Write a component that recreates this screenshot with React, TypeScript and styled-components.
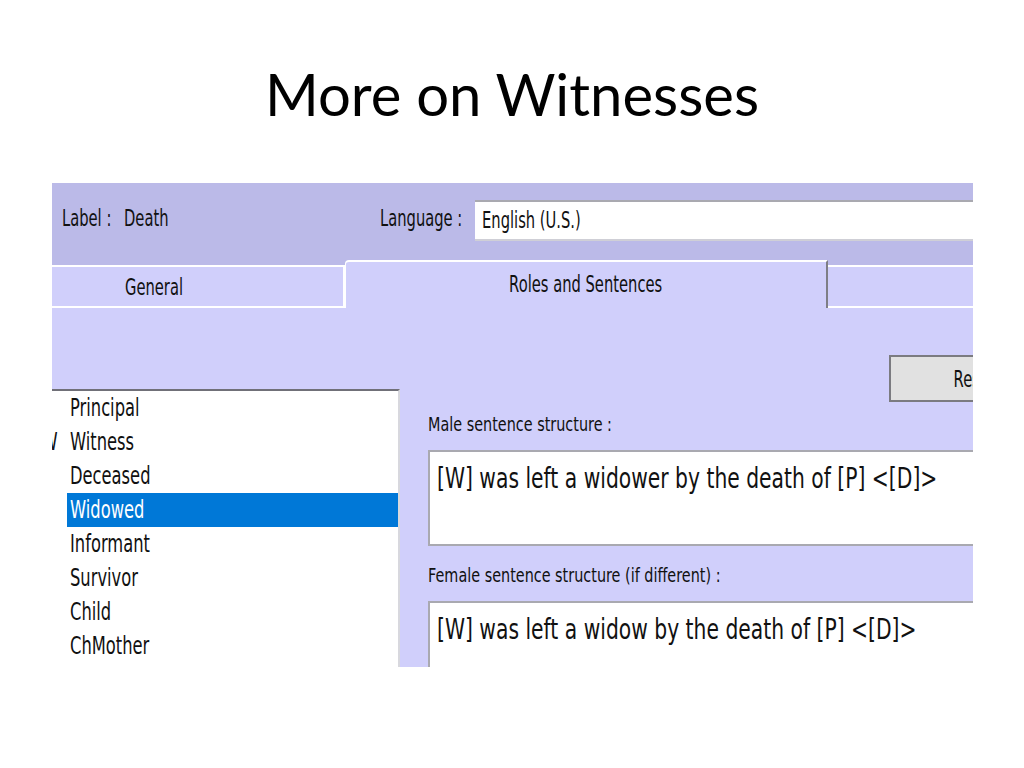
import React from "react";
import styled, { createGlobalStyle, css } from "styled-components";

const GlobalStyle = createGlobalStyle`
  html, body { margin: 0; padding: 0; background: #ffffff; }
  body { width: 1024px; height: 768px; overflow: hidden; }
`;

const squeeze = (scale: number, origin: string = "left") => css`
  display: inline-block;
  white-space: nowrap;
  transform: scaleX(${scale});
  transform-origin: ${origin} center;
`;

const Slide = styled.div`
  width: 1024px;
  height: 768px;
  background: #ffffff;
  display: flex;
  flex-direction: column;
`;

const TitleArea = styled.header`
  height: 183px;
  box-sizing: border-box;
  padding-top: 65px;
  text-align: center;
`;

const Title = styled.h1`
  margin: 0;
  font-family: Lato, "Open Sans", sans-serif;
  font-weight: 400;
  font-size: 58px;
  line-height: 58px;
  color: #000000;
`;

const Dialog = styled.div`
  margin-left: 52px;
  width: 921px;
  height: 484px;
  overflow: hidden;
  background: #d0cffb;
  display: flex;
  flex-direction: column;
  font-family: "DejaVu Sans", "Liberation Sans", sans-serif;
  color: #111111;
`;

const Header = styled.div`
  height: 77px;
  flex-shrink: 0;
  background: #bbbae8;
  display: grid;
  grid-template-columns: 62px 256px 95px 1fr;
  align-items: start;
  padding-left: 10px;
`;

const HeaderText = styled.span`
  margin-top: 20px;
  font-size: 23px;
  line-height: 30px;
  ${squeeze(0.64)}
`;

const LanguageInput = styled.div`
  margin-top: 17px;
  height: 41px;
  box-sizing: border-box;
  background: #ffffff;
  border-top: 2px solid #a9a9b0;
  border-bottom: 2px solid #cfcfd6;
  padding: 3px 7px;
  overflow: hidden;
`;

const InputText = styled.span`
  font-size: 23px;
  line-height: 30px;
  ${squeeze(0.64)}
`;

const TabRow = styled.div`
  height: 48px;
  flex-shrink: 0;
  display: flex;
  background: #bbbae8;
`;

const Tab = styled.div<{ $width?: number; $inset: number }>`
  ${(p) =>
    p.$width
      ? `width: ${p.$width}px; flex-shrink: 0; border-right: 2px solid #ffffff;`
      : "flex: 1; margin-right: -10px;"}
  margin-top: 5px;
  height: 43px;
  box-sizing: border-box;
  background: #d0cffb;
  border-top: 2px solid #ffffff;
  border-bottom: 2px solid #ffffff;
  padding: 5px 0 0 ${(p) => p.$inset}px;
  overflow: hidden;
`;

const ActiveTab = styled.div`
  width: 483px;
  flex-shrink: 0;
  height: 48px;
  box-sizing: border-box;
  background: #d0cffb;
  border-top: 2px solid #ffffff;
  border-left: 1px solid #ffffff;
  border-right: 2px solid #7e7e86;
  border-top-left-radius: 4px;
  padding-top: 7px;
  text-align: center;
`;

const TabText = styled.span<{ $center?: boolean }>`
  font-size: 23px;
  line-height: 30px;
  ${(p) => squeeze(0.64, p.$center ? "center" : "left")}
`;

const Content = styled.div`
  flex: 1;
  min-height: 0;
  display: flex;
`;

const LeftColumn = styled.div`
  width: 348px;
  flex-shrink: 0;
  padding-top: 81px;
  display: flex;
  flex-direction: column;
`;

const ListBox = styled.div`
  flex: 1;
  background: #ffffff;
  border-top: 2px solid #707078;
  border-right: 2px solid #d8d8de;
  overflow: hidden;
`;

const Row = styled.div`
  display: grid;
  grid-template-columns: 15px 1fr;
  height: 34px;
`;

const Marker = styled.div`
  overflow: hidden;
  display: flex;
  justify-content: flex-end;
  padding-right: 9px;
`;

const MarkerText = styled.span`
  font-size: 24px;
  line-height: 34px;
  ${squeeze(0.68, "right")}
`;

const Item = styled.div<{ $selected?: boolean }>`
  background: ${(p) => (p.$selected ? "#0078d7" : "transparent")};
  color: ${(p) => (p.$selected ? "#ffffff" : "#111111")};
  padding-left: 3px;
  overflow: hidden;
`;

const ItemText = styled.span`
  font-size: 24px;
  line-height: 34px;
  ${squeeze(0.68)}
`;

const RightColumn = styled.div`
  flex: 1;
  min-width: 0;
  padding: 47px 0 0 28px;
  display: flex;
  flex-direction: column;
`;

const ButtonRow = styled.div`
  display: flex;
  justify-content: flex-end;
  margin-bottom: 8px;
`;

const ResetButton = styled.div`
  width: 170px;
  height: 47px;
  flex-shrink: 0;
  margin-right: -86px;
  box-sizing: border-box;
  border: 2px solid #7b7b80;
  background: #e1e1e1;
  display: flex;
  align-items: center;
  justify-content: center;
`;

const ButtonText = styled.span`
  font-size: 23px;
  line-height: 30px;
  ${squeeze(0.64, "center")}
`;

const FieldLabel = styled.div`
  height: 28px;
  margin-bottom: 12px;
`;

const FieldLabelText = styled.span`
  font-size: 20px;
  line-height: 28px;
  ${squeeze(0.72)}
`;

const TextBox = styled.div<{ $height: number }>`
  height: ${(p) => p.$height}px;
  flex-shrink: 0;
  margin-right: -20px;
  margin-bottom: 15px;
  box-sizing: border-box;
  background: #ffffff;
  border: 2px solid #a9a9b0;
  border-right: none;
  padding: 10px 7px 0;
  overflow: hidden;
`;

const SentenceText = styled.span`
  font-size: 28px;
  line-height: 34px;
  ${squeeze(0.725)}
`;

const roles = [
  "Principal",
  "Witness",
  "Deceased",
  "Widowed",
  "Informant",
  "Survivor",
  "Child",
  "ChMother",
];

export default function App() {
  return (
    <>
      <GlobalStyle />
      <Slide>
        <TitleArea>
          <Title>More on Witnesses</Title>
        </TitleArea>
        <Dialog>
          <Header>
            <HeaderText>Label :</HeaderText>
            <HeaderText>Death</HeaderText>
            <HeaderText>Language :</HeaderText>
            <LanguageInput>
              <InputText>English (U.S.)</InputText>
            </LanguageInput>
          </Header>
          <TabRow>
            <Tab $width={293} $inset={73}>
              <TabText>General</TabText>
            </Tab>
            <ActiveTab>
              <TabText $center>Roles and Sentences</TabText>
            </ActiveTab>
            <Tab $inset={0} />
          </TabRow>
          <Content>
            <LeftColumn>
              <ListBox>
                {roles.map((r) => (
                  <Row key={r}>
                    <Marker>
                      {r === "Witness" && <MarkerText>W</MarkerText>}
                    </Marker>
                    <Item $selected={r === "Widowed"}>
                      <ItemText>{r}</ItemText>
                    </Item>
                  </Row>
                ))}
              </ListBox>
            </LeftColumn>
            <RightColumn>
              <ButtonRow>
                <ResetButton>
                  <ButtonText>Reset</ButtonText>
                </ResetButton>
              </ButtonRow>
              <FieldLabel>
                <FieldLabelText>Male sentence structure :</FieldLabelText>
              </FieldLabel>
              <TextBox $height={96}>
                <SentenceText>[W] was left a widower by the death of [P] &lt;[D]&gt;</SentenceText>
              </TextBox>
              <FieldLabel>
                <FieldLabelText>Female sentence structure (if different) :</FieldLabelText>
              </FieldLabel>
              <TextBox $height={110}>
                <SentenceText>[W] was left a widow by the death of [P] &lt;[D]&gt;</SentenceText>
              </TextBox>
            </RightColumn>
          </Content>
        </Dialog>
      </Slide>
    </>
  );
}
